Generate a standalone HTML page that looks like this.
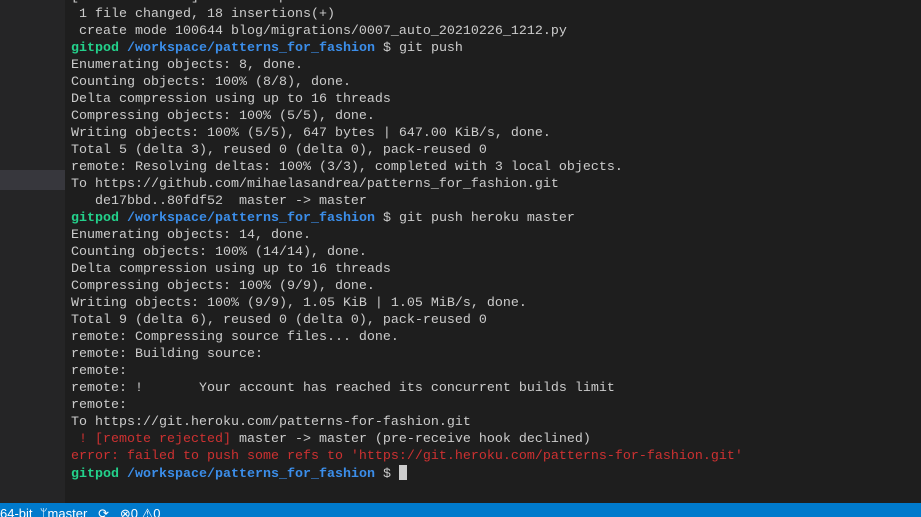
<!DOCTYPE html>
<html><head><style>
html,body{margin:0;width:921px;height:517px;overflow:hidden}
body{background:#1e1e1e;position:relative;font-family:"Liberation Mono",monospace}
#side{position:absolute;left:0;top:0;width:65px;height:503px;background:#252526}
#hl{position:absolute;left:0;top:170px;width:65px;height:20px;background:#37373d}
#term{position:absolute;left:71px;top:-11.5px;font-size:13.33px;line-height:17px;color:#cccccc;white-space:pre}
.g{color:#23d18b;font-weight:bold}.b{color:#3b8eea;font-weight:bold}.r{color:#cd3131}
.cur{display:inline-block;width:8px;height:15px;background:#cccccc;vertical-align:-3px}
#bar{position:absolute;left:0;top:503px;width:921px;height:14px;background:#007acc;color:#fff;font:13px "Liberation Sans",sans-serif;line-height:22px;white-space:pre;overflow:hidden}
</style></head><body>
<div id="side"><div id="hl"></div></div>
<div id="term">[master 1e0f21c] Create Superuser for Heroku
 1 file changed, 18 insertions(+)
 create mode 100644 blog/migrations/0007_auto_20210226_1212.py
<span class="g">gitpod</span> <span class="b">/workspace/patterns_for_fashion</span> $ git push
Enumerating objects: 8, done.
Counting objects: 100% (8/8), done.
Delta compression using up to 16 threads
Compressing objects: 100% (5/5), done.
Writing objects: 100% (5/5), 647 bytes | 647.00 KiB/s, done.
Total 5 (delta 3), reused 0 (delta 0), pack-reused 0
remote: Resolving deltas: 100% (3/3), completed with 3 local objects.
To https://github.com/mihaelasandrea/patterns_for_fashion.git
   de17bbd..80fdf52  master -> master
<span class="g">gitpod</span> <span class="b">/workspace/patterns_for_fashion</span> $ git push heroku master
Enumerating objects: 14, done.
Counting objects: 100% (14/14), done.
Delta compression using up to 16 threads
Compressing objects: 100% (9/9), done.
Writing objects: 100% (9/9), 1.05 KiB | 1.05 MiB/s, done.
Total 9 (delta 6), reused 0 (delta 0), pack-reused 0
remote: Compressing source files... done.
remote: Building source:
remote:
remote: !       Your account has reached its concurrent builds limit
remote:
To https://git.heroku.com/patterns-for-fashion.git
<span class="r"> ! [remote rejected]</span> master -&gt; master (pre-receive hook declined)
<span class="r">error: failed to push some refs to 'https://git.heroku.com/patterns-for-fashion.git'</span>
<span class="g">gitpod</span> <span class="b">/workspace/patterns_for_fashion</span> $ <span class="cur"></span></div>
<div id="bar">64-bit  ᛘmaster   ⟳   ⊗0 ⚠0</div>
</body></html>
